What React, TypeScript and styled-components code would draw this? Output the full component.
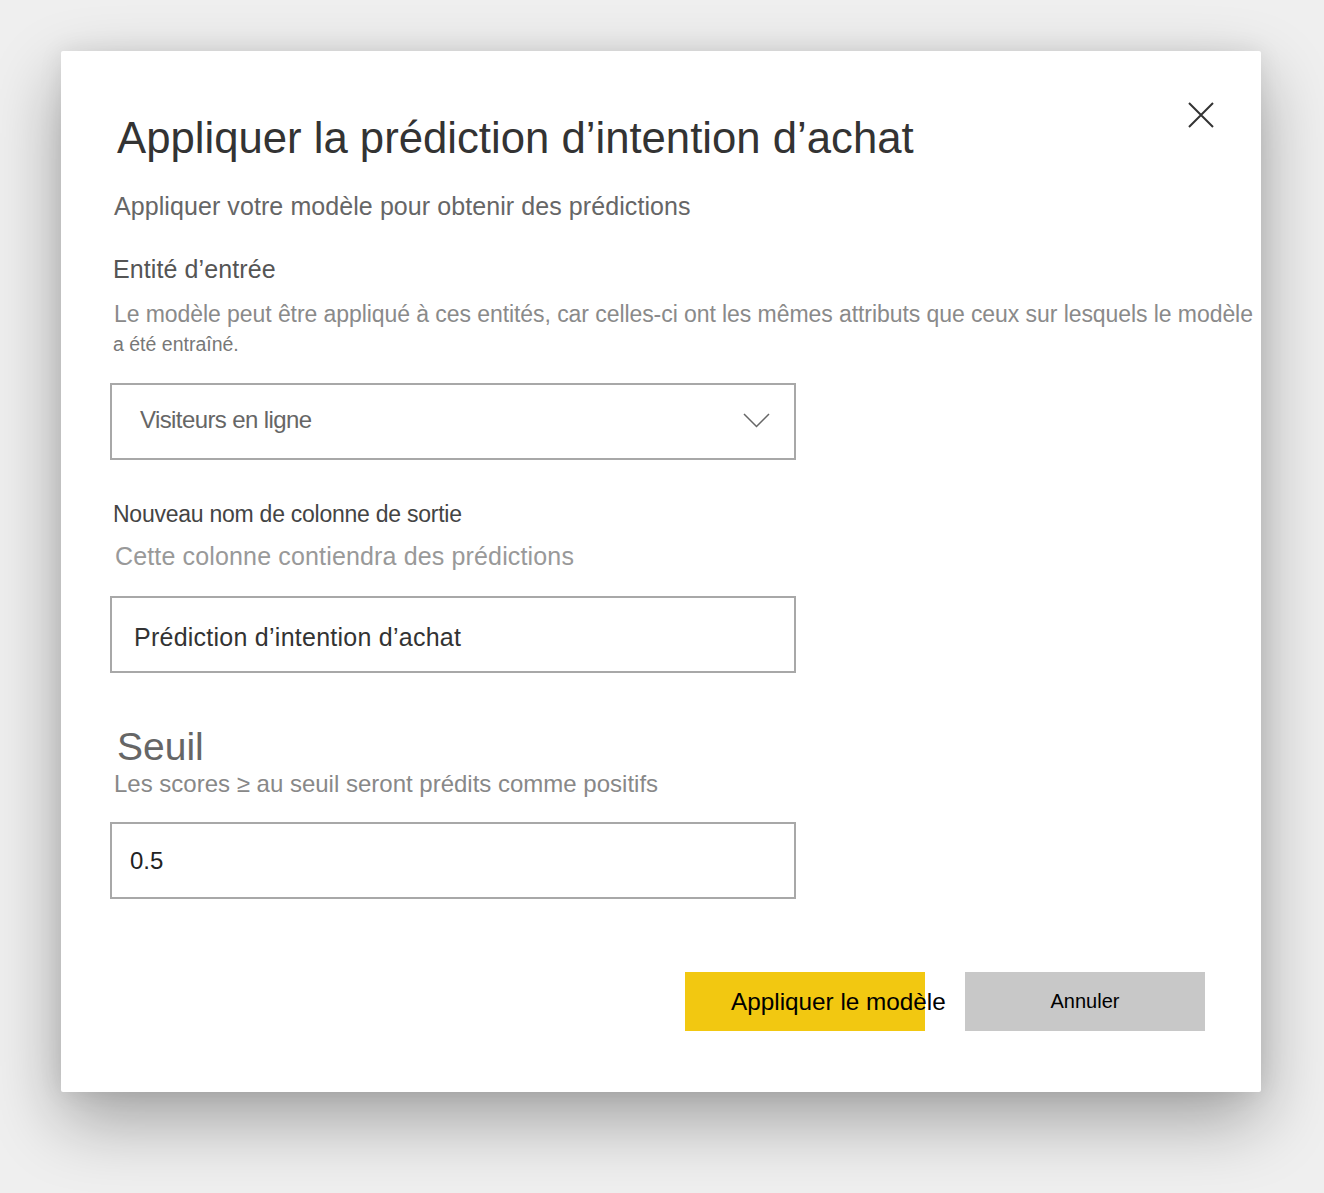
import React from "react";
import styled, { createGlobalStyle } from "styled-components";

const Global = createGlobalStyle`
  html, body { margin: 0; padding: 0; background: #efefef; }
  body { font-family: "Liberation Sans", Arial, sans-serif; }
  #root { min-height: 1193px; padding-top: 51px; box-sizing: border-box; }
`;

const Dialog = styled.div`
  position: relative;
  margin-left: 61px;
  width: 1200px;
  height: 1041px;
  box-sizing: border-box;
  padding: 61px 56px 61px 49px;
  background: #fff;
  border-radius: 2px;
  box-shadow: 0 28px 70px rgba(0, 0, 0, 0.33), 0 0 24px rgba(0, 0, 0, 0.08);
  display: flex;
  flex-direction: column;
`;

const Header = styled.div`
  display: flex;
  justify-content: space-between;
  align-items: flex-start;
`;

const Title = styled.h1`
  margin: 0 0 0 7px;
  font-weight: 400;
  font-size: 43.7px;
  line-height: 52px;
  color: #333;
`;

const CloseButton = styled.button`
  width: 26px;
  height: 26px;
  padding: 0;
  margin: -10px -9px 0 0;
  border: none;
  background: transparent;
  cursor: pointer;
  display: flex;
  align-items: center;
  justify-content: center;
`;

const Text = styled.div<{ $size: number; $lh: number; $color: string; $mt: number; $ml: number; $ls?: number }>`
  font-size: ${(p) => p.$size}px;
  line-height: ${(p) => p.$lh}px;
  color: ${(p) => p.$color};
  margin-top: ${(p) => p.$mt}px;
  margin-left: ${(p) => p.$ml}px;
  letter-spacing: ${(p) => p.$ls ?? 0}px;
  white-space: nowrap;
`;

const Field = styled.div<{ $mt: number; $pl: number; $pt?: number; $pb?: number }>`
  margin-top: ${(p) => p.$mt}px;
  width: 686px;
  height: 77px;
  box-sizing: border-box;
  border: 2px solid #a8a8a8;
  padding-left: ${(p) => p.$pl}px;
  padding-top: ${(p) => p.$pt ?? 0}px;
  padding-bottom: ${(p) => p.$pb ?? 0}px;
  padding-right: 24px;
  display: flex;
  align-items: center;
  justify-content: space-between;
`;

const FieldText = styled.span<{ $size: number; $color: string; $ls?: number; $narrow?: boolean }>`
  font-size: ${(p) => p.$size}px;
  color: ${(p) => p.$color};
  letter-spacing: ${(p) => p.$ls ?? 0}px;
  font-family: ${(p) => (p.$narrow ? '"Liberation Sans Narrow", "Liberation Sans", sans-serif' : '"Liberation Sans", Arial, sans-serif')};
`;

const Footer = styled.div`
  margin-top: auto;
  display: flex;
  justify-content: flex-end;
  gap: 40px;
`;

const Button = styled.button<{ $bg: string; $size: number; $align: string; $pl: number }>`
  width: 240px;
  height: 59px;
  border: none;
  border-radius: 0;
  background: ${(p) => p.$bg};
  color: #000;
  font-family: "Liberation Sans", Arial, sans-serif;
  font-size: ${(p) => p.$size}px;
  white-space: nowrap;
  overflow: visible;
  display: flex;
  align-items: center;
  justify-content: ${(p) => p.$align};
  padding: 0 0 0 ${(p) => p.$pl}px;
  cursor: pointer;
`;

export default function App() {
  return (
    <>
      <Global />
      <Dialog>
        <Header>
          <Title>Appliquer la prédiction d’intention d’achat</Title>
          <CloseButton aria-label="Fermer">
            <svg width="26" height="26" viewBox="0 0 26 26">
              <path d="M1 1 L25 25 M25 1 L1 25" stroke="#333" strokeWidth="2" fill="none" />
            </svg>
          </CloseButton>
        </Header>
        <Text $size={25} $lh={30} $color="#666" $mt={27} $ml={4} $ls={0.08}>
          Appliquer votre modèle pour obtenir des prédictions
        </Text>
        <Text $size={25} $lh={30} $color="#555" $mt={33} $ml={3} $ls={0.1}>
          Entité d’entrée
        </Text>
        <Text $size={23} $lh={28} $color="#8a8a8a" $mt={16} $ml={4} $ls={-0.07}>
          Le modèle peut être appliqué à ces entités, car celles-ci ont les mêmes attributs que ceux sur lesquels le modèle
        </Text>
        <Text $size={19.5} $lh={24} $color="#777" $mt={4} $ml={3}>
          a été entraîné.
        </Text>
        <Field $mt={27} $pl={28} $pb={3}>
          <FieldText $size={24} $color="#666" $ls={-0.6}>Visiteurs en ligne</FieldText>
          <svg width="27" height="15" viewBox="0 0 27 15">
            <path d="M1 1 L13.5 13.5 L26 1" stroke="#666" strokeWidth="1.5" fill="none" />
          </svg>
        </Field>
        <Text $size={23} $lh={28} $color="#444" $mt={40} $ml={3} $ls={-0.25}>
          Nouveau nom de colonne de sortie
        </Text>
        <Text $size={25} $lh={30} $color="#999" $mt={13} $ml={5} $ls={0.15}>
          Cette colonne contiendra des prédictions
        </Text>
        <Field $mt={25} $pl={22} $pt={6}>
          <FieldText $size={25} $color="#333" $ls={0.25}>Prédiction d’intention d’achat</FieldText>
        </Field>
        <Text $size={39} $lh={44} $color="#666" $mt={52} $ml={7}>
          Seuil
        </Text>
        <Text $size={24} $lh={28} $color="#888" $mt={1} $ml={4}>
          Les scores ≥ au seuil seront prédits comme positifs
        </Text>
        <Field $mt={24} $pl={18}>
          <FieldText $size={24} $color="#222" $narrow>0.5</FieldText>
        </Field>
        <Footer>
          <Button $bg="#f2c811" $size={24.3} $align="flex-start" $pl={46}>Appliquer le modèle</Button>
          <Button $bg="#c8c8c8" $size={20} $align="center" $pl={0}>Annuler</Button>
        </Footer>
      </Dialog>
    </>
  );
}
